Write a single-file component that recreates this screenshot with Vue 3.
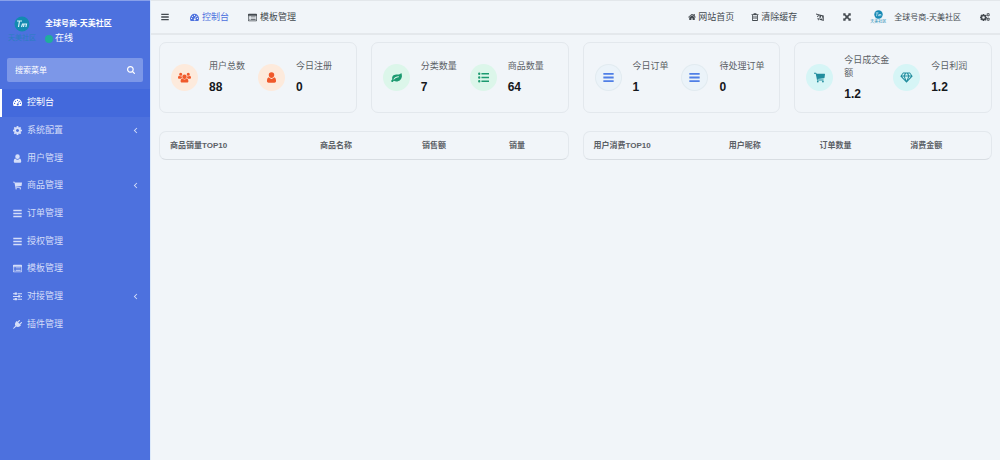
<script setup>
import { ref, h } from 'vue'

const glyphs = {
  bars: ['0 0 16 16', 'M0.500 1.500h15v2.600h-15zM0.500 6.700h15v2.600h-15zM0.500 11.900h15v2.600h-15z'],
  home: ['0 64 1664 1664', 'M1408 992v480q0 26-19 45t-45 19H960v-384H704v384H320q-26 0-45-19t-19-45V992q0-1 .5-3t.5-3l575-474 575 474q1 2 1 6zm223-69l-62 74q-8 9-21 11h-3q-13 0-21-7L832 424l-692 577q-12 8-24 7-13-2-21-11l-62-74q-8-10-7-23.500t11-21.500l719-599q32-26 76-26t76 26l244 204V288q0-14 9-23t23-9h192q14 0 23 9t9 23v408l219 182q10 8 11 21.500t-7 23.500z'],
  search: ['64 128 1664 1664', 'M1216 832q0-185-131.500-316.500T768 384 451.500 515.500 320 832t131.500 316.500T768 1280t316.500-131.500T1216 832zm512 832q0 52-38 90t-90 38q-54 0-90-38l-343-342q-179 124-399 124-143 0-273.500-55.500t-225-150-150-225T64 832t55.500-273.500 150-225 225-150T768 128t273.500 55.500 225 150 150 225T1472 832q0 220-124 399l343 343q37 37 37 90z'],
  cog: ['0 128 1536 1536', 'M1024 896q0-106-75-181t-181-75-181 75-75 181 75 181 181 75 181-75 75-181zm512-109v222q0 12-8 23t-20 13l-185 28q-19 54-39 91 35 50 107 138 10 12 10 25t-9 23q-27 37-99 108t-94 71q-12 0-26-9l-138-108q-44 23-91 38-16 136-29 186-7 28-36 28H657q-14 0-24.500-8.500T621 1642l-28-184q-49-16-90-37l-141 107q-10 9-25 9-14 0-25-11-126-114-165-168-7-10-7-23 0-12 8-23 15-21 51-66.500t54-70.500q-27-50-41-99l-183-27q-13-2-21-12.500T0 1013V791q0-12 8-23t19-13l186-28q14-46 39-92-40-57-107-138-10-12-10-24 0-10 9-23 26-36 98.500-107.500T337 271q13 0 26 10l138 107q44-23 91-38 16-136 29-186 7-28 36-28h222q14 0 24.500 8.500T915 166l28 184q49 16 90 37l142-107q9-9 24-9 13 0 25 10 129 119 165 170 7 8 7 22 0 12-8 23-15 21-51 66.500t-54 70.500q26 50 41 98l183 28q13 2 21 12.500t8 23.500z'],
  gauge: ['0 0 16 16', 'M8 1.500a8 8 0 0 0-8 8c0 1.800.4 3.300 1.100 4.500h13.800c.7-1.200 1.100-2.700 1.100-4.500a8 8 0 0 0-8-8zM2.800 8.600a1.100 1.100 0 1 1 0 2.200 1.100 1.100 0 0 1 0-2.200zM4.400 4.800a1.100 1.100 0 1 1 0 2.200 1.100 1.100 0 0 1 0-2.200zM8 3.200a1.100 1.100 0 1 1 0 2.200 1.100 1.100 0 0 1 0-2.200zM9.300 6.200l1 .3-.9 3.400a1.800 1.800 0 1 1-1.100-.3zM11.900 4.800a1.100 1.100 0 1 1 0 2.200 1.100 1.100 0 0 1 0-2.200zM13.200 8.600a1.100 1.100 0 1 1 0 2.200 1.100 1.100 0 0 1 0-2.200z'],
  user: ['0 0 16 16', 'M8 0.500a4 4 0 0 1 4 4c0 2.300-1.700 4.400-4 4.400S4 6.800 4 4.500a4 4 0 0 1 4-4zM4.300 7.800C5.300 9.200 6.500 10 8 10s2.700-.8 3.700-2.200c2.200.4 2.900 2.900 2.900 5.400 0 1.500-1 2.500-2.400 2.500H3.800c-1.400 0-2.400-1-2.400-2.500 0-2.500.7-5 2.900-5.400z'],
  users: ['0 0 20 16', 'M10 3.500a3.400 3.400 0 1 1 0 6.800 3.400 3.400 0 0 1 0-6.800zM6.900 9.600a4.400 4.400 0 0 0 6.200 0c2 .2 2.900 2 2.900 4 0 1.300-.9 2.200-2.100 2.200H6.100C4.900 15.800 4 14.900 4 13.600c0-2 .9-3.800 2.900-4zM4.200.5a2.400 2.400 0 1 1 0 4.800 2.400 2.400 0 0 1 0-4.800zM15.800.5a2.400 2.400 0 1 1 0 4.800 2.400 2.400 0 0 1 0-4.800zM1.800 5.200c1.200 1 2.400 1.200 3.800.8 0 1.200.2 2 .8 2.800-1 0-1.700.4-2.300 1H2C.8 9.800 0 9.200 0 8.200c0-1.200.6-3 1.800-3zM18.200 5.200c-1.200 1-2.400 1.200-3.800.8 0 1.200-.2 2-.8 2.800 1 0 1.700.4 2.300 1H18c1.200 0 2-.6 2-1.600 0-1.200-.6-3-1.800-3z'],
  cart: ['0 0 16 16', 'M0 1.200h2.800c.5 0 .8.400.9 1.400h11.700c.4 0 .6.300.6.700l-.7 5.200c0 .4-.3.600-.7.600l-9.400 1.100.2.800h8.500v1.300H4.500L2.500 2.500H0zM5.500 12.600a1.300 1.300 0 1 1 0 2.600 1.300 1.300 0 0 1 0-2.600zM13 12.600a1.300 1.300 0 1 1 0 2.600 1.300 1.300 0 0 1 0-2.600z'],
  panel: ['0 0 16 16', 'M1.300 1.500h13.400c.8 0 1.300.5 1.300 1.300v10.400c0 .8-.5 1.300-1.300 1.300H1.300c-.8 0-1.300-.5-1.300-1.300V2.800c0-.8.5-1.300 1.300-1.300zM1.200 4.700v8.500h13.600V4.700zM2.500 6h1.600v1.200H2.500zM5.200 6h8.400v1.200H5.200zM2.500 8.300h1.600v1.200H2.500zM5.200 8.300h8.400v1.200H5.200zM2.500 10.600h1.600v1.200H2.500zM5.200 10.600h8.400v1.200H5.200z'],
  sliders: ['0 0 16 16', 'M0 2.400h3V1h4v4H3V3.900H0zM8 2.400h8v1.500H8zM0 7.300h9V5.900h4v4H9V8.800H0zM14 7.300h2v1.500h-2zM0 12.200h3v-1.400h4v4H3v-1.100H0zM8 12.200h8v1.500H8z'],
  plug: ['0 0 16 16', 'M15.700 3.900c.5.500.4 1.100 0 1.500l-2.800 2.800 1.200 1.200-1.300 1.300c-2 2-5 2.400-7.200 1L2.500 14.800.2 16 0 15.800l1.200-2.300 3.100-3.100c-1.400-2.200-1-5.200 1-7.200L6.600 1.900l1.200 1.200L10.600.3c.4-.4 1-.5 1.500 0s.4 1 0 1.500L9.300 4.600l2.100 2.100 2.800-2.800c.5-.4 1-.5 1.500 0z'],
  trash: ['0 0 16 16', 'M5.500.5h5l.7 1.800H15V4h-1v10c0 1-.7 1.800-1.600 1.800H3.600C2.700 15.800 2 15 2 14V4H1V2.300h3.800zM3.700 4v9.800h8.600V4zM5 5.500h1.300V12H5zM7.400 5.500h1.300V12H7.400zM9.700 5.500H11V12H9.700z'],
  lang: ['0 0 16 16', 'M0 1l7 1.800v2L5.700 4.500C5.400 6.300 4.400 7.800 2.800 8.500L1.800 7.200c1.100-.6 1.900-1.700 2.100-3.100L0 3zM7 2.800L15.500 5v11L7 13.600zM10.400 6.200L8.300 11.800l1.400.4.400-1.100 1.900.5.400 1.400 1.400.4L12 6.600zM3 10l3 .8v1.600l-1.200-.3 1.400 2-1 .8L3 12z'],
  expand: ['0 0 16 16', 'M.5.5H6L4.400 2.100 8 5.700l3.600-3.600L10 .5h5.500V6l-1.600-1.600L10.300 8l3.600 3.600 1.600-1.600v5.500H10l1.600-1.600L8 10.300l-3.600 3.600L6 15.500H.5V10l1.600 1.600L5.700 8 2.100 4.400.5 6z'],
  cogs: ['0 0 20 16', 'M5.600 2h2.800l.4 1.700 1 .5 1.700-.8 1.600 1.900-1 1.500.3 1.100 1.600.4v2.400l-1.700.5-.5 1 .8 1.500-1.800 1.700-1.500-.9-1 .3L8 16H5.500l-.4-1.700-1-.4-1.600.8L.8 13l.9-1.600-.4-1L0 10V7.500l1.500-.4.4-1L1 4.700l1.700-1.800 1.600.9.900-.4zM7 6.400a2.600 2.600 0 1 0 0 5.200 2.600 2.600 0 0 0 0-5.200zM15.500 0h1.600l.4 1.200 1.300-.2.800 1.400-.8.900.8 1.100-.8 1.400-1.300-.2-.4 1.200h-1.600l-.4-1.200-1.300.2-.8-1.400.8-1.100-.8-.9.800-1.400 1.300.2zM16.300 2.200a1.200 1.200 0 1 0 0 2.400 1.200 1.200 0 0 0 0-2.400zM15.500 9h1.600l.4 1.200 1.300-.2.800 1.400-.8.900.8 1.100-.8 1.400-1.300-.2-.4 1.200h-1.600l-.4-1.200-1.300.2-.8-1.400.8-1.100-.8-.9.800-1.400 1.300.2zM16.300 11.200a1.200 1.200 0 1 0 0 2.400 1.200 1.200 0 0 0 0-2.400z'],
  leaf: ['0 0 16 16', 'M15 1.500c.6 1.400 1 3 .9 4.600-.3 4.500-3.700 7.600-8 7.600-1.400 0-2.500-.5-3.700-.9-.7.400-1.200 1.900-2.200 1.900-.8 0-1.700-1-1.700-1.700 0-1 1.300-1.600 1.600-2.400C.9 6.600 3.600 4 7.500 3.800c2.500-.2 5.300.3 7.500-2.300zM11 6.300c-3.200 0-5.500 1.400-7.300 3.900-.3.500.3 1.200.9.800 2-2 3.500-3.200 6.400-3.300.8 0 .8-1.400 0-1.400z'],
  list: ['0 0 16 16', 'M1.800 .9a1.700 1.700 0 1 1 0 3.400 1.700 1.700 0 0 1 0-3.400zM1.800 6.300a1.700 1.700 0 1 1 0 3.400 1.700 1.700 0 0 1 0-3.400zM1.800 11.700a1.700 1.700 0 1 1 0 3.400 1.700 1.700 0 0 1 0-3.400zM5 1.500h11v2.200H5zM5 6.900h11v2.200H5zM5 12.300h11v2.200H5z'],
  gem: ['0 0 18 16', 'M4 .7h10l4 5.400L9 15.700 0 6.100zM4.400 2.300L2.300 5.200h2.600L6.600 2zM8.400 2L6.600 5.200h4.800L9.600 2zM11.400 2l1.700 3.200h2.600l-2.100-2.900zM2.600 6.700l4.300 4.700-2-4.700zM6.500 6.700L9 12.700l2.500-6zM13.100 6.700l-2 4.700 4.300-4.700z'],
  left: ['0 0 16 16', 'M10.500 1.500L12 3 7 8l5 5-1.500 1.500L4 8z'],
}

const Icon = (props) =>
  h('svg', { class: 'icon', viewBox: glyphs[props.name][0], 'aria-hidden': 'true' }, [
    h('path', { d: glyphs[props.name][1], fill: 'currentColor', 'fill-rule': 'evenodd' }),
  ])
Icon.props = ['name']

const keyword = ref('')
const siteName = '全球号商-天美社区'

const menu = [
  { icon: 'gauge', label: '控制台', active: true },
  { icon: 'cog', label: '系统配置', sub: true },
  { icon: 'user', label: '用户管理' },
  { icon: 'cart', label: '商品管理', sub: true },
  { icon: 'bars', label: '订单管理' },
  { icon: 'bars', label: '授权管理' },
  { icon: 'panel', label: '模板管理' },
  { icon: 'sliders', label: '对接管理', sub: true },
  { icon: 'plug', label: '插件管理' },
]

const cards = [
  { tone: 'orange', stats: [['users', '用户总数', '88'], ['user', '今日注册', '0']] },
  { tone: 'green', stats: [['leaf', '分类数量', '7'], ['list', '商品数量', '64']] },
  { tone: 'blue', stats: [['bars', '今日订单', '1'], ['bars', '待处理订单', '0']] },
  { tone: 'teal', stats: [['cart', '今日成交金额', '1.2'], ['gem', '今日利润', '1.2']] },
]

const tables = [
  [['商品销量TOP10', 38], ['商品名称', 25], ['销售额', 21], ['销量', 16]],
  [['用户消费TOP10', 34], ['用户昵称', 22], ['订单数量', 22], ['消费金额', 22]],
]
</script>

<template>
  <div class="layout">
    <aside class="sidebar">
      <div class="profile">
        <div class="logo">
          <svg class="mark" viewBox="0 0 16 16" aria-hidden="true">
            <circle cx="8" cy="8" r="7.500" fill="#138ab0" />
            <path d="M3 5h5M5.500 5L4.500 11M7.500 11l1-3 1.500 0-.5 3M10 8h2.500l-.6 3" stroke="#d8f2fa" stroke-width="1.200" fill="none" />
          </svg>
          <span>天美社区</span>
        </div>
        <div>
          <p class="name">{{ siteName }}</p>
          <p class="status"><i class="dot"></i>在线</p>
        </div>
      </div>
      <form class="search" @submit.prevent>
        <input v-model="keyword" type="text" placeholder="搜索菜单" aria-label="搜索菜单" />
        <button type="submit" aria-label="搜索"><Icon name="search" /></button>
      </form>
      <nav class="menu">
        <a v-for="m in menu" :key="m.label" href="#" :class="{ active: m.active }">
          <Icon :name="m.icon" />
          <span>{{ m.label }}</span>
          <Icon v-if="m.sub" name="left" class="arrow" />
        </a>
      </nav>
    </aside>

    <div class="page">
      <header class="topbar">
        <button type="button" class="toggle" aria-label="菜单"><Icon name="bars" /></button>
        <nav class="tabs">
          <a href="#" class="current"><Icon name="gauge" />控制台</a>
          <a href="#"><Icon name="panel" />模板管理</a>
        </nav>
        <div class="tools">
          <a href="#"><Icon name="home" />网站首页</a>
          <a href="#"><Icon name="trash" />清除缓存</a>
          <button type="button" aria-label="语言"><Icon name="lang" /></button>
          <button type="button" aria-label="全屏"><Icon name="expand" /></button>
          <a href="#" class="account">
            <span class="logo small">
              <svg class="mark" viewBox="0 0 16 16" aria-hidden="true">
                <circle cx="8" cy="8" r="7.500" fill="#1789b4" />
                <path d="M3 5h5M5.500 5L4.500 11M7.500 11l1-3 1.500 0-.5 3M10 8h2.500l-.6 3" stroke="#d8f2fa" stroke-width="1.200" fill="none" />
              </svg>
              <span>天美社区</span>
            </span>
            {{ siteName }}
          </a>
          <button type="button" aria-label="设置"><Icon name="cogs" /></button>
        </div>
      </header>

      <main class="content">
        <section class="cards">
          <article v-for="c in cards" :key="c.tone" class="card" :class="c.tone">
            <div v-for="s in c.stats" :key="s[1]" class="stat">
              <span class="badge"><Icon :name="s[0]" /></span>
              <div class="figures">
                <p class="label">{{ s[1] }}</p>
                <p class="value">{{ s[2] }}</p>
              </div>
            </div>
          </article>
        </section>
        <section class="tables">
          <div v-for="(t, i) in tables" :key="i" class="panel">
            <table>
              <thead>
                <tr>
                  <th v-for="c in t" :key="c[0]" scope="col" :style="{ width: c[1] + '%' }">{{ c[0] }}</th>
                </tr>
              </thead>
            </table>
          </div>
        </section>
      </main>
    </div>
  </div>
</template>

<style>
body {
  background: #f1f5f9;
}
</style>

<style scoped>
.layout {
  display: flex;
  min-height: 100vh;
  font: 9px/13px "Liberation Sans", "Noto Sans CJK SC", sans-serif;
  color: #444a50;
}
p {
  margin: 0;
}
a {
  color: inherit;
  text-decoration: none;
}
button {
  display: flex;
  padding: 0;
  border: 0;
  background: none;
  color: inherit;
}
.icon {
  display: block;
  flex: none;
  width: 8px;
  height: 8px;
}
.sidebar {
  flex: none;
  box-sizing: border-box;
  width: 150px;
  border-top: 1px solid #88a0ea;
  background: #4d71de;
  color: #fff;
}
.profile {
  display: flex;
  gap: 9px;
  padding: 15px 8px 12px;
}
.logo {
  display: flex;
  flex-direction: column;
  align-items: center;
  width: 28px;
  font-size: 7px;
  line-height: 8px;
  color: #2a7ec0;
  white-space: nowrap;
}
.mark {
  width: 16px;
  height: 16px;
  margin-bottom: 2px;
}
.name {
  font-size: 8px;
  line-height: 15px;
  font-weight: 700;
}
.status {
  display: flex;
  align-items: center;
  gap: 2px;
  line-height: 15px;
}
.dot {
  width: 8px;
  height: 8px;
  border-radius: 50%;
  background: #1fae9b;
}
.search {
  display: flex;
  align-items: center;
  height: 24px;
  margin: 0 7px 7px;
  padding: 0 8px;
  border-radius: 2px;
  background: #7c97e8;
}
.search input {
  flex: 1;
  min-width: 0;
  padding: 0;
  border: 0;
  outline: 0;
  background: none;
  font: inherit;
  font-size: 8px;
  color: #fff;
}
.search input::placeholder {
  color: #fff;
  opacity: 1;
}
.menu {
  display: grid;
  grid-auto-rows: 1fr;
  min-height: 249px;
}
.menu a {
  display: flex;
  align-items: center;
  gap: 5px;
  padding: 0 11px;
  border-left: 2px solid transparent;
  color: #d5def9;
}
.menu .icon {
  width: 9px;
  height: 9px;
}
.menu a.active {
  border-left-color: #fff;
  background: #4369dc;
  color: #fff;
}
.menu .arrow {
  width: 7px;
  height: 7px;
  margin-left: auto;
}
.page {
  flex: 1;
  min-width: 0;
  border-left: 1px solid #dce9fa;
}
.topbar {
  display: flex;
  align-items: center;
  box-sizing: border-box;
  height: 35px;
  padding: 0 10px;
  border-top: 1px solid #e3e7eb;
  border-bottom: 2px solid #e4e8ec;
  white-space: nowrap;
}
.tabs {
  display: flex;
  gap: 19px;
  margin-left: 21px;
}
.tabs a {
  display: flex;
  align-items: center;
  gap: 3px;
}
.tabs .icon {
  width: 9px;
  height: 9px;
}
.tabs .current {
  color: #4d71de;
}
.tools {
  display: flex;
  align-items: center;
  gap: 19px;
  margin-left: auto;
}
.tools a {
  display: flex;
  align-items: center;
  gap: 2px;
}
.tools a:not(.account) + a:not(.account) {
  margin-left: -2px;
}
.tools .account {
  gap: 8px;
  font-size: 8px;
}
.tools .small {
  width: 16px;
  font-size: 4px;
  line-height: 5px;
  color: #1789b4;
}
.small .mark {
  width: 9px;
  height: 9px;
  margin: 0;
}
.tools button:last-child .icon {
  width: 10px;
}
.content {
  padding: 7px 8px;
}
.cards {
  display: grid;
  grid-template-columns: repeat(4, 1fr);
  gap: 14px;
}
.card,
.panel {
  border: 1px solid #e3e8ed;
  border-radius: 7px;
}
.card {
  display: grid;
  grid-template-columns: 1fr 1fr;
  align-items: center;
  box-sizing: border-box;
  min-height: 71px;
  padding: 10px 11px;
}
.stat {
  display: flex;
  align-items: center;
  gap: 11px;
}
.badge {
  display: grid;
  place-items: center;
  flex: none;
  width: 27px;
  height: 27px;
  border-radius: 50%;
}
.badge .icon {
  width: 13px;
  height: 11px;
}
.orange .badge {
  background: #fdeadc;
  color: #f0592b;
}
.green .badge {
  background: #dcf6ea;
  color: #1c9a70;
}
.blue .badge {
  background: #ebf3f9;
  box-shadow: inset 0 0 0 1px #e2ebf0;
  color: #4f7fe6;
}
.teal .badge {
  background: #d6f5f6;
  color: #218d9e;
}
.label {
  color: #5c6166;
}
.value {
  margin-top: 6px;
  font-size: 12px;
  line-height: 16px;
  font-weight: 700;
  color: #15181c;
}
.tables {
  display: grid;
  grid-template-columns: 1fr 1fr;
  gap: 14px;
  margin-top: 18px;
}
.panel {
  border-bottom-color: #d8dde2;
}
table {
  width: 100%;
  table-layout: fixed;
  border-collapse: collapse;
}
th {
  padding: 7px 0 7px 10px;
  text-align: left;
  font-size: 8px;
  line-height: 13px;
  color: #5b6066;
  white-space: nowrap;
}
</style>
